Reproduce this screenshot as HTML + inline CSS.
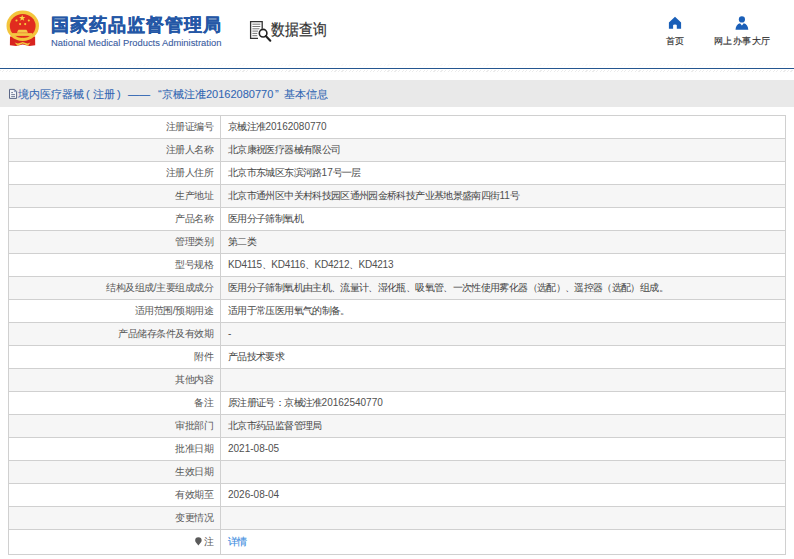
<!DOCTYPE html>
<html><head><meta charset="utf-8">
<style>
*{margin:0;padding:0;box-sizing:border-box}
html,body{width:794px;height:559px;overflow:hidden;background:#fff;font-family:"Liberation Sans",sans-serif;}
.abs{position:absolute}
#emblem{left:0;top:0;width:50px;height:50px}
#title{left:51px;top:13.5px;font-size:18px;font-weight:900;letter-spacing:0.95px;color:#2457a6;-webkit-text-stroke:0.35px #2457a6;white-space:nowrap;line-height:22px}
#en{left:51px;top:38px;font-size:9.4px;letter-spacing:0px;color:#3a5d9f;-webkit-text-stroke:0.1px #3a5d9f;white-space:nowrap;line-height:10px}
#sicon{left:249px;top:20px;width:23px;height:23px}
#stext{left:271px;top:20px;font-size:16px;transform:scaleX(0.87);transform-origin:0 0;color:#333;-webkit-text-stroke:0.2px #333;white-space:nowrap;line-height:20px}
.nav{font-size:9px;color:#333;-webkit-text-stroke:0.15px #333;white-space:nowrap;line-height:10px}
#line{left:0;top:68px;width:794px;height:1px;background:#255690}
#hatch1{left:0;top:64px;width:794px;height:2px;background:repeating-linear-gradient(135deg,#e8e8e8 0 0.8px,#fff 0.8px 2.5px);opacity:.25}
#hatch2{left:0;top:70px;width:794px;height:2px;background:repeating-linear-gradient(135deg,#dcdcdc 0 0.8px,#fff 0.8px 2.5px);opacity:.55}
#band{left:0;top:80px;width:794px;height:27px;background:#e9e9e9}
#crumb{left:18px;top:87px;font-size:11px;color:#3166b3;-webkit-text-stroke:0.08px #3166b3;white-space:nowrap;line-height:14px}
#cicon{left:8px;top:88px;width:10px;height:12px}
table{position:absolute;left:8px;top:115px;width:778px;border-collapse:collapse;font-size:10px;letter-spacing:-0.52px;color:#444}
td{height:23px;border:1px solid #d0d0d0;padding:0;line-height:12px;white-space:nowrap}
td.l{width:212px;text-align:right;padding-right:7px;color:#595959}
td.v{padding-left:7px;letter-spacing:-0.64px}
tr:nth-child(even) td{background:#f6f6f6}
tr.last td{height:25px}
.n{font-size:10px;letter-spacing:0;-webkit-text-stroke:0;color:#505050}
.kd{letter-spacing:-0.25px}
a{color:#3d8de0;-webkit-text-stroke:0.15px #3d8de0;text-decoration:none}
</style></head><body>
<svg id="emblem" class="abs" viewBox="0 0 50 50">
  <path d="M10 36.5 L9.9 45.2 L16 46 L22.7 44.5 L29.4 46 L35.2 45.2 L35.1 36.5 Z" fill="#d8241f"/>
  <ellipse cx="22.75" cy="25.7" rx="16.25" ry="15.2" fill="#f3c53c"/>
  <ellipse cx="22.7" cy="26.05" rx="12.9" ry="11.95" fill="#e12c1f"/>
  <path d="M12.2 33.1 H32.3 V35.9 H12.2Z" fill="#f4c842"/>
  <path d="M16.9 32.7 L17.8 30.8 L18.6 29.7 H26.3 L27.1 30.8 L27.9 32.7Z" fill="#f4ca48"/>
  <path d="M19.5 39.5 Q22.7 36.2 26 39.5Z" fill="#f3c53c"/>
  <path d="M14.6 42.5 L17.5 45.8 L22.7 43.5 L27.9 45.8 L30.5 42.5 L27.5 43.6 L22.7 42 L17.9 43.6Z" fill="#f3c53c"/>
  <polygon points="22.2,14.8 23.0,17.1 25.4,17.1 23.5,18.5 24.2,20.8 22.2,19.4 20.2,20.8 20.9,18.5 19.0,17.1 21.4,17.1" fill="#f8d648"/>
  <circle cx="16.5" cy="20.5" r="1.05" fill="#f6cf3c"/>
  <circle cx="28.8" cy="20.5" r="1.05" fill="#f6cf3c"/>
  <circle cx="20.1" cy="24.1" r="1.05" fill="#f6cf3c"/>
  <circle cx="25.2" cy="24.1" r="1.05" fill="#f6cf3c"/>
</svg>
<div id="title" class="abs">国家药品监督管理局</div>
<div id="en" class="abs">National Medical Products Administration</div>
<svg id="sicon" class="abs" viewBox="0 0 23 23">
  <path d="M13.2 8.8 V1.7 H1.6 V18.4 H9" fill="none" stroke="#333" stroke-width="1.3"/>
  <path d="M3.4 4.2 H11.3 M3.4 6.5 H11.3 M3.4 8.8 H10.5 M3.4 11.1 H9 M3.4 13.4 H8.3 M3.4 15.7 H8.3" stroke="#777" stroke-width="1"/>
  <circle cx="14.1" cy="13.2" r="3.8" fill="#fff" stroke="#222" stroke-width="1.6"/>
  <path d="M16.8 16.1 L21.3 20.7" stroke="#222" stroke-width="2.1" stroke-linecap="round"/>
</svg>
<div id="stext" class="abs">数据查询</div>
<svg class="abs" style="left:668px;top:16px" width="14" height="13" viewBox="0 0 14 13">
  <path d="M7 0.8 L13.1 6.4 V12.75 H8.8 V9.3 Q8.8 8.6 7 8.6 Q5.1 8.6 5.1 9.3 V12.75 H0.9 V6.4 Z" fill="#1a5fb8"/>
</svg>
<div class="abs nav" style="left:666px;top:36px">首页</div>
<svg class="abs" style="left:735px;top:15px" width="14" height="15" viewBox="0 0 14 15">
  <circle cx="6.9" cy="4.4" r="3.1" fill="#1a5fb8"/>
  <path d="M0.5 14.7 Q0.9 9.2 5 8.2 L6.9 10.5 L8.8 8.2 Q12.9 9.2 13.3 14.7 Z" fill="#1a5fb8"/>
</svg>
<div class="abs nav" style="left:714px;top:36px;letter-spacing:0.4px">网上办事大厅</div>
<div id="hatch1" class="abs"></div>
<div id="line" class="abs"></div>
<div id="hatch2" class="abs"></div>
<div id="band" class="abs"></div>
<svg id="cicon" class="abs" viewBox="8 88 10 12">
  <path d="M9.5 89.4 H14.6 L16.6 91.4 V98.4 H9.5 Z" fill="#f4f5f8" stroke="#5b6787" stroke-width="1"/>
  <path d="M14.4 89.6 V91.6 H16.4" fill="none" stroke="#6f86b0" stroke-width="0.8"/>
  <path d="M11.2 92.6 H13 M11.2 94.6 H15 M11.2 96.6 H15" stroke="#66708c" stroke-width="0.9"/>
</svg>
<div id="crumb" class="abs">
<span class="abs" style="left:0">境内医疗器械</span><span class="abs" style="left:68px">(</span><span class="abs" style="left:75px">注册</span><span class="abs" style="left:99px">)</span><span class="abs" style="left:110px">——</span><span class="abs" style="left:140px">“</span><span class="abs" style="left:144px">京械注准20162080770</span><span class="abs" style="left:257px">”</span><span class="abs" style="left:266px">基本信息</span></div>
<table>
<tr><td class="l">注册证编号</td><td class="v">京械注准<span class="n">20162080770</span></td></tr>
<tr><td class="l">注册人名称</td><td class="v">北京康祝医疗器械有限公司</td></tr>
<tr><td class="l">注册人住所</td><td class="v">北京市东城区东滨河路<span class="n">17</span>号一层</td></tr>
<tr><td class="l">生产地址</td><td class="v">北京市通州区中关村科技园区通州园金桥科技产业基地景盛南四街<span class="n">11</span>号</td></tr>
<tr><td class="l">产品名称</td><td class="v">医用分子筛制氧机</td></tr>
<tr><td class="l">管理类别</td><td class="v">第二类</td></tr>
<tr><td class="l">型号规格</td><td class="v"><span class="n kd">KD4115</span>、<span class="n kd">KD4116</span>、<span class="n kd">KD4212</span>、<span class="n kd">KD4213</span></td></tr>
<tr><td class="l">结构及组成/主要组成成分</td><td class="v">医用分子筛制氧机由主机、流量计、湿化瓶、吸氧管、一次性使用雾化器（选配）、遥控器（选配）组成。</td></tr>
<tr><td class="l">适用范围/预期用途</td><td class="v">适用于常压医用氧气的制备。</td></tr>
<tr><td class="l">产品储存条件及有效期</td><td class="v"><span class="n">-</span></td></tr>
<tr><td class="l">附件</td><td class="v">产品技术要求</td></tr>
<tr><td class="l">其他内容</td><td class="v"></td></tr>
<tr><td class="l">备注</td><td class="v">原注册证号：京械注准<span class="n">20162540770</span></td></tr>
<tr><td class="l">审批部门</td><td class="v">北京市药品监督管理局</td></tr>
<tr><td class="l">批准日期</td><td class="v"><span class="n">2021-08-05</span></td></tr>
<tr><td class="l">生效日期</td><td class="v"></td></tr>
<tr><td class="l">有效期至</td><td class="v"><span class="n">2026-08-04</span></td></tr>
<tr><td class="l">变更情况</td><td class="v"></td></tr>
<tr class="last"><td class="l"><svg width="7" height="9" viewBox="0 0 7 9" style="vertical-align:-0.5px;margin-right:1.5px"><path d="M3.4 0.2 A3.25 3.25 0 0 1 6.65 3.45 C6.65 5.2 5 6.3 3.4 8.6 C1.8 6.3 0.15 5.2 0.15 3.45 A3.25 3.25 0 0 1 3.4 0.2Z" fill="#5a5a5a"/></svg>注</td><td class="v"><a>详情</a></td></tr>
</table>
</body></html>
